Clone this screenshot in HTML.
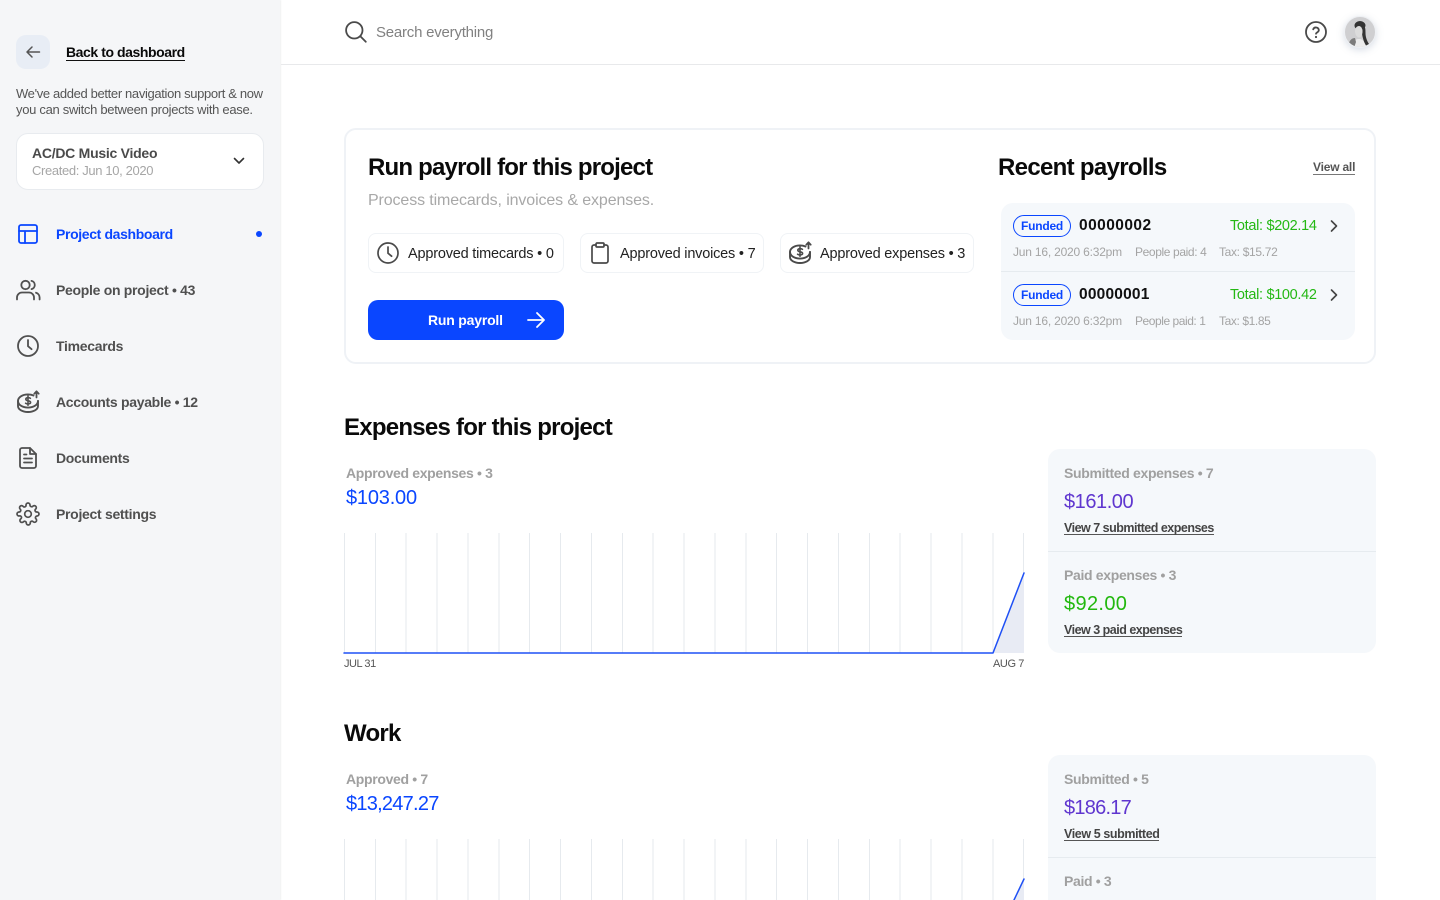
<!DOCTYPE html>
<html><head><meta charset="utf-8"><title>Project dashboard</title>
<style>
html,body{margin:0;padding:0;width:1440px;height:900px;overflow:hidden;background:#fff;font-family:"Liberation Sans",sans-serif;}
#root{position:relative;width:1440px;height:900px;overflow:hidden;}
.t{position:absolute;white-space:nowrap;line-height:20px;height:20px;}
.b{font-weight:700;}
.abs{position:absolute;box-sizing:border-box;}
svg{position:absolute;overflow:visible;fill:none;stroke-linecap:round;stroke-linejoin:round;}
.nav{font-size:14px;font-weight:700;color:#505050;letter-spacing:-.3px;}
.chip{position:absolute;top:233px;height:40px;border:1px solid #f0f3f6;border-radius:8px;box-sizing:border-box;}
.ct{font-size:14.5px;color:#222;letter-spacing:-.2px;}
.h{font-size:24px;font-weight:700;color:#0a0a0a;line-height:30px;height:30px;}
.lab{font-size:14px;font-weight:700;color:#a0a0a0;letter-spacing:-.33px;}
.val{font-size:20px;line-height:24px;height:24px;}
.lnk{font-size:12.5px;font-weight:700;color:#444;border-bottom:1px solid #555;line-height:14px;height:13px;letter-spacing:-.5px;}
.sm{font-size:12px;color:#a4a4a4;letter-spacing:-.2px;}
.grid{position:absolute;left:344px;width:680px;height:120px;background:repeating-linear-gradient(90deg,#e6eaee 0,#e6eaee 1px,transparent 1px,transparent 30.87px);}
.panel{position:absolute;left:1048px;width:328px;background:#f5f8fb;border-radius:12px;}
.divd{position:absolute;left:1048px;width:328px;height:1px;background:#e6ebef;}
.fund{position:absolute;left:1013px;width:58px;height:22px;box-sizing:border-box;border:1.5px solid #0a46ff;border-radius:11px;color:#0a46ff;font-size:12px;font-weight:700;text-align:center;line-height:20px;letter-spacing:-.2px;}
.num{font-size:15.5px;font-weight:700;color:#111;}
.tot{font-size:14.5px;color:#24b814;letter-spacing:-.32px;}
</style></head><body><div id="root">

<!-- Sidebar -->
<div class="abs" style="left:0;top:0;width:280px;height:900px;background:#f5f6f8;box-shadow:1px 0 1px rgba(40,50,70,.07);"></div>
<div class="abs" style="left:16px;top:35px;width:34px;height:34px;background:#e8edf5;border-radius:10px;"></div>
<svg style="left:25px;top:44px" width="16" height="16" viewBox="0 0 16 16" stroke="#555" stroke-width="1.500"><path d="M14.500 8H2M7 3L2 8l5 5"/></svg>
<div class="t b" style="left:66px;top:43px;font-size:14px;color:#0a0a0a;letter-spacing:-.43px;border-bottom:1.500px solid #111;line-height:19px;height:17px;">Back to dashboard</div>
<div class="t" style="left:16px;top:84px;font-size:13px;color:#555;letter-spacing:-.35px;">We've added better navigation support &amp; now</div>
<div class="t" style="left:16px;top:100px;font-size:13px;color:#555;letter-spacing:-.3px;">you can switch between projects with ease.</div>
<div class="abs" style="left:16px;top:133px;width:248px;height:57px;background:#fff;border:1px solid #e8ebef;border-radius:12px;"></div>
<div class="t b" style="left:32px;top:143px;font-size:14px;color:#4a4a4a;letter-spacing:-.26px;">AC/DC Music Video</div>
<div class="t" style="left:32px;top:161px;font-size:13px;color:#a6a6a6;letter-spacing:-.36px;">Created: Jun 10, 2020</div>
<svg style="left:233px;top:157px" width="12" height="8" viewBox="0 0 12 8" stroke="#333" stroke-width="1.600"><path d="M1.500 1.500L6 6l4.500-4.500"/></svg>

<svg style="left:18px;top:224px" width="20" height="20" viewBox="0 0 20 20" stroke="#0a46ff" stroke-width="1.800"><rect x="1" y="1" width="18" height="18" rx="2"/><path d="M1 7h18M7 7v12"/></svg>
<div class="t nav" style="left:56px;top:224px;color:#0a46ff;letter-spacing:-.36px;">Project dashboard</div>
<div class="abs" style="left:256px;top:231px;width:6px;height:6px;border-radius:50%;background:#0a46ff;"></div>

<svg style="left:16px;top:279px" width="25" height="22" viewBox="0 0 25 22" stroke="#505050" stroke-width="1.800"><circle cx="9.500" cy="6" r="4.200"/><path d="M1 20.500v-2a5 5 0 0 1 5-5h7a5 5 0 0 1 5 5v2M15.500 1.900a4.200 4.200 0 0 1 0 8.200M20 13.700a5 5 0 0 1 3.600 4.800v2"/></svg>
<div class="t nav" style="left:56px;top:280px;">People on project • 43</div>

<svg style="left:17px;top:335px" width="22" height="22" viewBox="0 0 22 22" stroke="#505050" stroke-width="1.800"><circle cx="11" cy="11" r="10"/><path d="M11 5v6.200l3.600 3"/></svg>
<div class="t nav" style="left:56px;top:336px;">Timecards</div>

<svg style="left:16px;top:390px" width="24" height="24" viewBox="0 0 24 24" stroke="#505050" stroke-width="1.900"><path d="M17.500 5.500C16 4.800 14 4.400 12 4.400 6.500 4.400 2 7.200 2 11s4.500 6.600 10 6.600S22 14.800 22 11"/><path d="M2 11v5c0 3.500 4.500 6 10 6s10-2.500 10-6v-5"/><path d="M14.400 8.300c-1-.9-4.600-1-4.600.9 0 2.200 4.800 1 4.800 3.200 0 1.900-3.700 1.800-5 .8M12 5.800v9.400" stroke-width="1.600"/><path d="M20.500 7.500V1.500M18.300 3.700l2.200-2.400 2.200 2.400" stroke-width="1.800"/></svg>
<div class="t nav" style="left:56px;top:392px;">Accounts payable • 12</div>

<svg style="left:19px;top:447px" width="18" height="22" viewBox="0 0 18 22" stroke="#505050" stroke-width="1.800"><path d="M11 1H3a2 2 0 0 0-2 2v16a2 2 0 0 0 2 2h12a2 2 0 0 0 2-2V7z"/><path d="M11 1v6h6M5 11.500h8M5 15.500h8M5 7.500h2.500"/></svg>
<div class="t nav" style="left:56px;top:448px;">Documents</div>

<svg style="left:16px;top:502px" width="24" height="24" viewBox="0 0 24 24" stroke="#505050" stroke-width="1.700"><circle cx="12" cy="12" r="3.300"/><path d="M19.600 15a1.650 1.650 0 0 0 .33 1.820l.06.06a2 2 0 1 1-2.830 2.830l-.06-.06a1.650 1.650 0 0 0-2.820 1.170V21a2 2 0 1 1-4 0v-.09a1.650 1.650 0 0 0-2.870-1.110l-.06.06a2 2 0 1 1-2.830-2.830l.06-.06A1.650 1.650 0 0 0 3.090 14H3a2 2 0 1 1 0-4h.09A1.650 1.650 0 0 0 4.200 7.130l-.06-.06a2 2 0 1 1 2.830-2.830l.06.06A1.650 1.650 0 0 0 10 3.090V3a2 2 0 1 1 4 0v.09a1.650 1.650 0 0 0 2.820 1.170l.06-.06a2 2 0 1 1 2.830 2.830l-.06.06A1.650 1.650 0 0 0 20.910 10H21a2 2 0 1 1 0 4h-.09a1.650 1.650 0 0 0-1.310 1z"/></svg>
<div class="t nav" style="left:56px;top:504px;">Project settings</div>

<!-- Top bar -->
<div class="abs" style="left:281px;top:64px;width:1159px;height:1px;background:#e8e9eb;"></div>
<svg style="left:345px;top:21px" width="22" height="22" viewBox="0 0 22 22" stroke="#4a4a4a" stroke-width="1.800"><circle cx="9.300" cy="9.300" r="8.200"/><path d="M15.300 15.300l5.500 5.500"/></svg>
<div class="t" style="left:376px;top:23px;font-size:15px;color:#818181;letter-spacing:-.22px;">Search everything</div>
<svg style="left:1305px;top:21px" width="22" height="22" viewBox="0 0 22 22" stroke="#4a4a4a" stroke-width="1.800"><circle cx="11" cy="11" r="10"/><path d="M8.200 8.300a2.900 2.900 0 0 1 5.600.9c0 1.900-2.800 2.500-2.800 3.500"/><path d="M11 16h.01" stroke-width="2.200"/></svg>
<div class="abs" style="left:1344px;top:16px;width:32px;height:32px;border-radius:50%;background:#cfcfd1;border:1px solid #eef0f3;box-shadow:0 2px 8px rgba(120,140,170,.30);overflow:hidden;">
<svg style="left:-1px;top:-1px" width="32" height="32" viewBox="0 0 32 32"><path d="M8 32c0-6 3-9 7-9s6 3 8 9z" fill="#ececec"/><ellipse cx="16" cy="9.500" rx="5.500" ry="4.500" fill="#333"/><path d="M19 9c2.500 1 2.500 5 2.500 8 0 4 1.500 8 3.500 11l-3 1.500c-2-3-3.500-8-4-12z" fill="#333"/><path d="M11 15c0-3 2-5 4-5s3.500 2.500 3.500 5.500-1.500 6-3.500 6-4-3-4-6.500z" fill="#dcdcdc"/><path d="M5 27c1-3 3-5 6-5l1 4-2 6H7z" fill="#7c7c7c"/></svg>
</div>

<!-- Payroll card -->
<div class="abs" style="left:344px;top:128px;width:1032px;height:236px;border:2px solid #eff2f6;border-radius:12px;"></div>
<div class="t h" style="left:368px;top:153px;letter-spacing:-.8px;">Run payroll for this project</div>
<div class="t" style="left:368px;top:192px;font-size:16px;color:#a8a8a8;letter-spacing:-.12px;line-height:18px;">Process timecards, invoices &amp; expenses.</div>

<div class="chip" style="left:368px;width:196px;"></div>
<svg style="left:377px;top:242px" width="22" height="22" viewBox="0 0 22 22" stroke="#4a4a4a" stroke-width="1.700"><circle cx="11" cy="11" r="10"/><path d="M11 5v6.200l3.600 3"/></svg>
<div class="t ct" style="left:408px;top:244px;">Approved timecards • 0</div>

<div class="chip" style="left:580px;width:184px;"></div>
<svg style="left:591px;top:242px" width="18" height="22" viewBox="0 0 18 22" stroke="#4a4a4a" stroke-width="1.700"><path d="M5 3H3a2 2 0 0 0-2 2v14a2 2 0 0 0 2 2h12a2 2 0 0 0 2-2V5a2 2 0 0 0-2-2h-2"/><rect x="5" y="1" width="8" height="4" rx="1"/></svg>
<div class="t ct" style="left:620px;top:244px;">Approved invoices • 7</div>

<div class="chip" style="left:780px;width:194px;"></div>
<svg style="left:788px;top:241px" width="24" height="24" viewBox="0 0 24 24" stroke="#4a4a4a" stroke-width="1.900"><path d="M17.500 5.500C16 4.800 14 4.400 12 4.400 6.500 4.400 2 7.200 2 11s4.500 6.600 10 6.600S22 14.800 22 11"/><path d="M2 11v5c0 3.500 4.500 6 10 6s10-2.500 10-6v-5"/><path d="M14.400 8.300c-1-.9-4.600-1-4.600.9 0 2.200 4.800 1 4.800 3.200 0 1.900-3.700 1.800-5 .8M12 5.800v9.400" stroke-width="1.600"/><path d="M20.500 7.500V1.500M18.300 3.700l2.200-2.400 2.200 2.400" stroke-width="1.800"/></svg>
<div class="t ct" style="left:820px;top:244px;">Approved expenses • 3</div>

<div class="abs" style="left:368px;top:300px;width:196px;height:40px;background:#0a46ff;border-radius:10px;"></div>
<div class="t b" style="left:428px;top:310px;font-size:14px;color:#fff;letter-spacing:-.2px;">Run payroll</div>
<svg style="left:527px;top:311px" width="18" height="18" viewBox="0 0 18 18" stroke="#fff" stroke-width="1.800"><path d="M1 9h16M10 2l7 7-7 7"/></svg>

<div class="t h" style="left:998px;top:153px;letter-spacing:-.68px;">Recent payrolls</div>
<div class="t b" style="left:1313px;top:160px;font-size:12px;color:#555;letter-spacing:-.2px;border-bottom:1px solid #777;line-height:15px;height:14px;">View all</div>

<div class="abs" style="left:1001px;top:203px;width:354px;height:137px;background:#f5f8fb;border-radius:12px;"></div>
<div class="abs" style="left:1001px;top:271px;width:354px;height:1px;background:#e6ebef;"></div>

<div class="fund" style="top:215px;">Funded</div>
<div class="t num" style="left:1079px;top:216px;letter-spacing:.45px;">00000002</div>
<div class="t tot" style="left:1230px;top:216px;">Total: $202.14</div>
<svg style="left:1330px;top:220px" width="8" height="12" viewBox="0 0 8 12" stroke="#444" stroke-width="1.600"><path d="M1.500 1L6.500 6l-5 5"/></svg>
<div class="t sm" style="left:1013px;top:242px;">Jun 16, 2020 6:32pm</div>
<div class="t sm" style="left:1135px;top:242px;letter-spacing:-.38px;">People paid: 4</div>
<div class="t sm" style="left:1219px;top:242px;letter-spacing:-.33px;">Tax: $15.72</div>

<div class="fund" style="top:284px;">Funded</div>
<div class="t num" style="left:1079px;top:285px;letter-spacing:.2px;">00000001</div>
<div class="t tot" style="left:1230px;top:285px;">Total: $100.42</div>
<svg style="left:1330px;top:289px" width="8" height="12" viewBox="0 0 8 12" stroke="#444" stroke-width="1.600"><path d="M1.500 1L6.500 6l-5 5"/></svg>
<div class="t sm" style="left:1013px;top:311px;">Jun 16, 2020 6:32pm</div>
<div class="t sm" style="left:1135px;top:311px;letter-spacing:-.45px;">People paid: 1</div>
<div class="t sm" style="left:1219px;top:311px;letter-spacing:-.4px;">Tax: $1.85</div>

<!-- Expenses -->
<div class="t h" style="left:344px;top:413px;letter-spacing:-.75px;">Expenses for this project</div>
<div class="t lab" style="left:346px;top:463px;">Approved expenses • 3</div>
<div class="t val" style="left:346px;top:486px;color:#0a46ff;letter-spacing:-.2px;">$103.00</div>
<div class="grid" style="top:533px;"></div>
<svg style="left:0;top:0" width="1440" height="900"><path d="M993 653L1024 573V653Z" fill="#e8ebf4"/><path d="M344 653H993L1024 573" stroke="#1f50f5" stroke-width="1.500"/></svg>
<div class="t" style="left:344px;top:654px;font-size:11px;color:#555;letter-spacing:-.45px;">JUL 31</div>
<div class="t" style="left:993px;top:654px;font-size:11px;color:#555;letter-spacing:-.4px;">AUG 7</div>

<div class="panel" style="top:449px;height:204px;"></div>
<div class="divd" style="top:551px;"></div>
<div class="t lab" style="left:1064px;top:463px;">Submitted expenses • 7</div>
<div class="t val" style="left:1064px;top:490px;color:#5f36cf;letter-spacing:-.45px;">$161.00</div>
<div class="t lnk" style="left:1064px;top:521px;">View 7 submitted expenses</div>
<div class="t lab" style="left:1064px;top:565px;">Paid expenses • 3</div>
<div class="t val" style="left:1064px;top:592px;color:#22b80e;letter-spacing:.35px;">$92.00</div>
<div class="t lnk" style="left:1064px;top:623px;">View 3 paid expenses</div>

<!-- Work -->
<div class="t h" style="left:344px;top:719px;letter-spacing:-.75px;">Work</div>
<div class="t lab" style="left:346px;top:769px;">Approved • 7</div>
<div class="t val" style="left:346px;top:792px;color:#0a46ff;letter-spacing:-.75px;">$13,247.27</div>
<div class="grid" style="top:839px;height:61px;"></div>
<svg style="left:0;top:0" width="1440" height="900"><path d="M1014 900L1024 879V900Z" fill="#e8ebf4"/><path d="M1014 900L1024 879" stroke="#1f50f5" stroke-width="1.500"/></svg>

<div class="panel" style="top:755px;height:160px;"></div>
<div class="divd" style="top:857px;"></div>
<div class="t lab" style="left:1064px;top:769px;">Submitted • 5</div>
<div class="t val" style="left:1064px;top:796px;color:#5f36cf;letter-spacing:-.75px;">$186.17</div>
<div class="t lnk" style="left:1064px;top:827px;letter-spacing:-.4px;">View 5 submitted</div>
<div class="t lab" style="left:1064px;top:871px;">Paid • 3</div>
</div></body></html>
